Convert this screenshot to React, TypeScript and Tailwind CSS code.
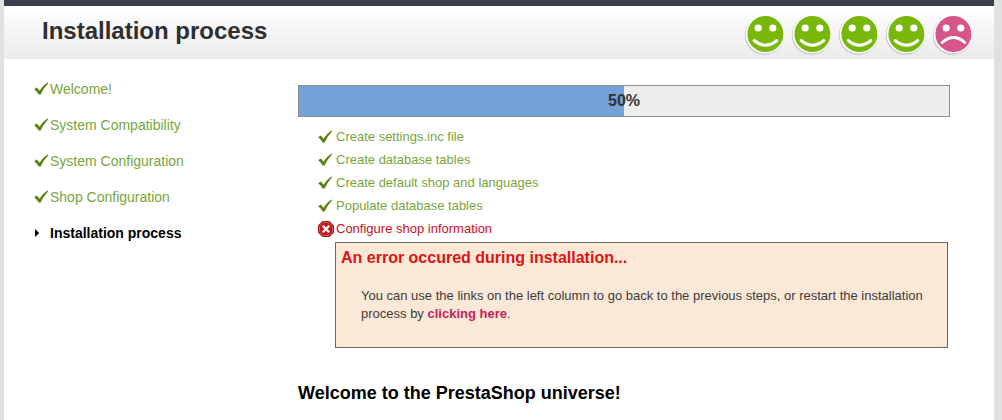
import clsx from 'clsx';

const MENU = ['Welcome!', 'System Compatibility', 'System Configuration', 'Shop Configuration', 'Installation process'];

const STEPS = [
  { label: 'Create settings.inc file', ok: true },
  { label: 'Create database tables', ok: true },
  { label: 'Create default shop and languages', ok: true },
  { label: 'Populate database tables', ok: true },
  { label: 'Configure shop information', ok: false },
];

const PROGRESS = 50;

function Check() {
  return (
    <svg viewBox="0 0 16 16" className="w-4 h-4 shrink-0" aria-hidden="true">
      <path d="M0.2 8.2 2.6 6.6Q4.4 7.8 5.4 9.8Q8.4 4.6 13.4 1.4L14.2 2.2Q9.6 7 6.6 13.6L4.6 13.6Q3 10.4 0.2 8.2Z" fill="#5c8214" />
    </svg>
  );
}

function Cross() {
  return (
    <svg viewBox="0 0 16 16" className="w-4 h-4 shrink-0" aria-hidden="true">
      <path d="M4.6 0h6.8L16 4.6v6.8L11.4 16H4.6L0 11.4V4.6Z" fill="#96121a" />
      <path d="M5 1.4h6L14.6 5v6L11 14.6H5L1.4 11V5Z" fill="#c4161f" stroke="#e08488" strokeWidth="0.7" />
      <path d="M4.8 4.8l6.4 6.4M11.2 4.8l-6.4 6.4" stroke="#fff" strokeWidth="2.3" />
    </svg>
  );
}

function Arrow() {
  return (
    <svg viewBox="0 0 16 16" className="w-4 h-4 shrink-0" aria-hidden="true">
      <path d="M1 4 5.2 8 1 12Z" fill="#000" />
    </svg>
  );
}

function Face({ happy }: { happy: boolean }) {
  return (
    <svg viewBox="0 0 42 42" className="w-[42px] h-[42px] shrink-0" aria-hidden="true">
      <circle cx="20.4" cy="21.4" r="19.8" fill="#dcdcdc" />
      <circle cx="20.4" cy="20.8" r="19.4" fill="#c4c4c4" />
      <circle cx="21" cy="20.2" r="19.4" fill="#fff" />
      <circle cx="21.4" cy="20" r="18" fill={happy ? '#78b80a' : '#d6568a'} />
      <circle cx="14.2" cy="14" r="3.6" fill="#fff" />
      <circle cx="28.8" cy="14" r="3.6" fill="#fff" />
      <path
        d={happy ? 'M10.2 26.5Q21.5 36 32.8 26.5' : 'M10.2 28.5Q21.5 18.5 32.8 28.5'}
        fill="none"
        stroke="#fff"
        strokeWidth="3"
        strokeLinecap="round"
      />
    </svg>
  );
}

export default function App() {
  return (
    <div className="min-h-screen flex bg-[#dfe2e1] pl-1 pr-2 font-['Liberation_Sans',Arial,sans-serif]">
      <div className="flex-1 min-w-0 bg-white">
        <header className="flex items-start justify-between border-t-6 border-[#3a404b] bg-linear-to-b from-white to-[#ebebeb] pl-[38px] pr-5">
          <h1 className="pb-1 text-2xl leading-[49px] font-bold text-[#2f2f2f]">Installation process</h1>
          <div className="flex gap-[5px] pt-2">
            {MENU.map((m, i) => <Face key={m} happy={i < 4} />)}
          </div>
        </header>

        <div className="flex pt-5 pl-[30px] pr-11">
          <ol className="w-[264px] shrink-0">
            {MENU.map((m, i) => (
              <li
                key={m}
                className={clsx(
                  'flex items-center mb-4 text-sm leading-5',
                  i < MENU.length - 1 ? 'text-[#78a53c]' : 'font-bold text-black'
                )}
              >
                {i < MENU.length - 1 ? <Check /> : <Arrow />}
                {m}
              </li>
            ))}
          </ol>

          <main className="flex-1 min-w-0 pt-1.5">
            <div
              role="progressbar"
              aria-label="Installation process"
              aria-valuenow={PROGRESS}
              className="relative h-8 border border-[#8f8f8f] bg-[#ededed]"
            >
              <div className="h-full bg-[#73a2db]" style={{ width: `${PROGRESS}%` }} />
              <span className="absolute inset-0 flex items-center justify-center text-base font-bold text-[#333]">
                {PROGRESS}%
              </span>
            </div>

            <ul className="mt-2 pl-5">
              {STEPS.map(s => (
                <li
                  key={s.label}
                  className={clsx('flex items-center gap-0.5 text-[13px] leading-[23px]', s.ok ? 'text-[#78a53c]' : 'text-[#cc1018]')}
                >
                  {s.ok ? <Check /> : <Cross />}
                  {s.label}
                </li>
              ))}
            </ul>

            <section className="ml-[37px] mr-0.5 mt-0.5 pt-[5px] pb-6 pl-[5px] pr-4 border border-[#666] bg-[#fbe8d7]">
              <h3 className="text-base leading-5 font-bold text-[#dc1414]">An error occured during installation...</h3>
              <p className="mt-[19px] pl-5 text-[13px] leading-[18px] text-[#3c3c3c]">
                You can use the links on the left column to go back to the previous steps, or restart the installation process by{' '}
                <a href="#" className="font-bold text-[#c4215a]">clicking here</a>.
              </p>
            </section>

            <h2 className="mt-[33px] text-lg leading-6 font-bold text-black">Welcome to the PrestaShop universe!</h2>
          </main>
        </div>
      </div>
    </div>
  );
}
